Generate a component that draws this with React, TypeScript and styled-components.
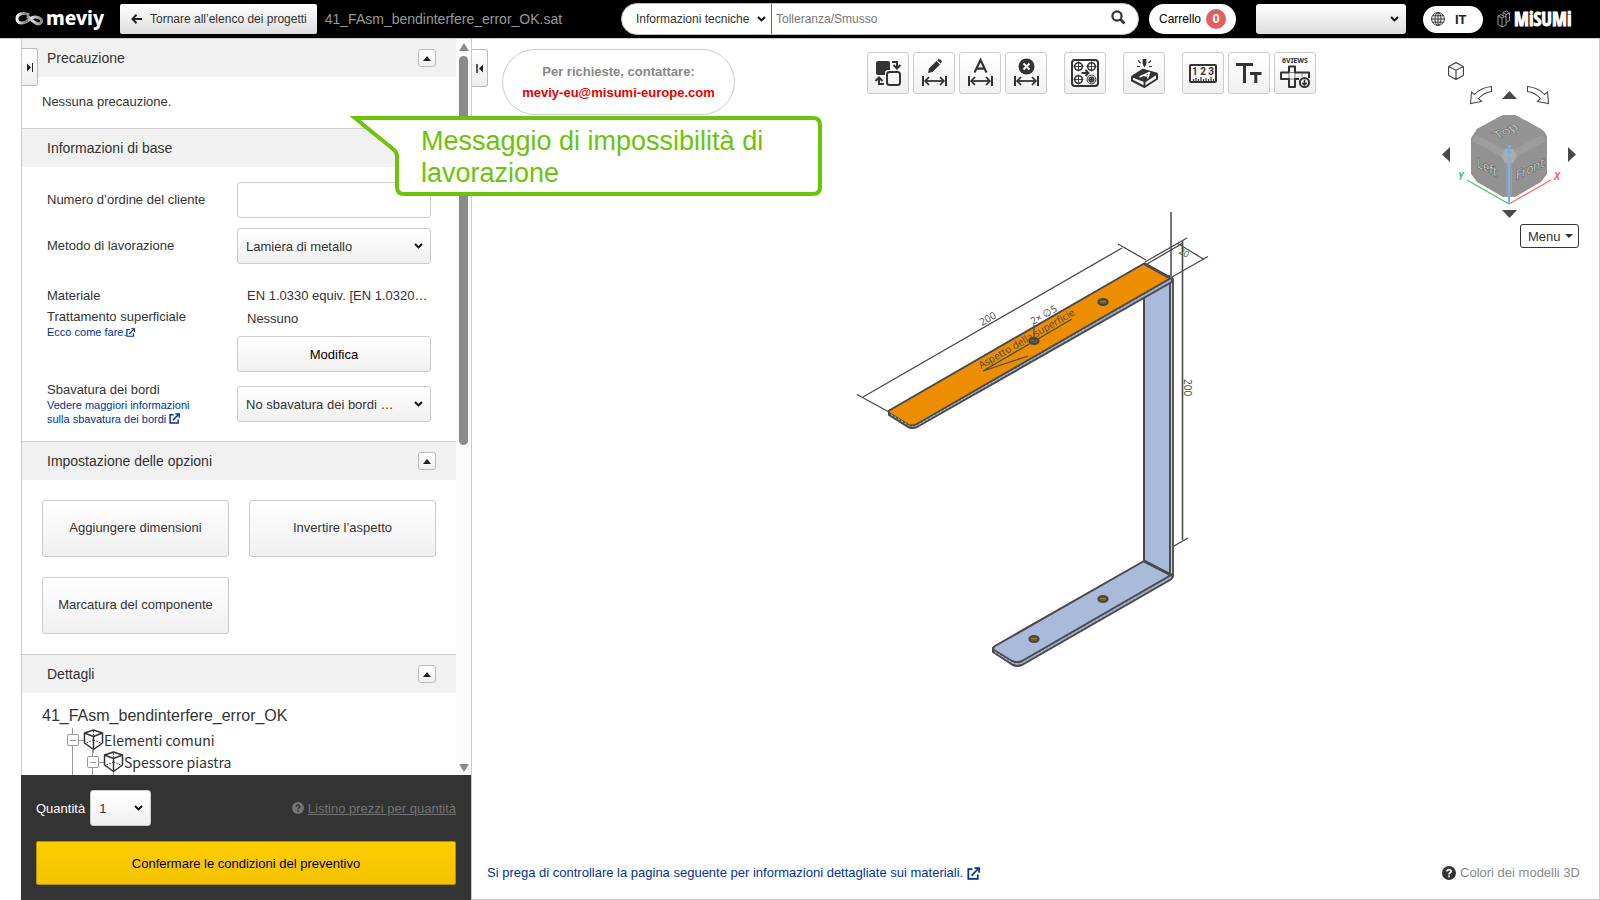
import React from "react";
import styled, { createGlobalStyle } from "styled-components";

const GlobalStyle = createGlobalStyle`
  * { box-sizing: border-box; }
  html, body { margin: 0; padding: 0; background: #fff; }
  body, button, input, select {
    font-family: "Liberation Sans", Arial, sans-serif;
    font-size: 13px;
    color: #333;
  }
  button { cursor: pointer; }
`;

const INK = "#333";
const LINE = "#4a4a4a";

/* ---------- page frame ---------- */

const Page = styled.div`
  position: relative;
  display: flex;
  flex-direction: column;
  height: 100vh;
  min-height: 600px;
  overflow: hidden;
`;

const Body = styled.div`
  display: flex;
  flex: 1;
  min-height: 0;
  padding-left: 21px;
`;

/* ---------- header ---------- */

const Header = styled.header`
  display: flex;
  align-items: center;
  height: 39px;
  flex: none;
  padding-right: 27px;
  background: #000;
  border-bottom: 1px solid #ccc;
`;

const HeaderLeft = styled.div`
  display: flex;
  align-items: center;
  flex: 1;
  min-width: 0;
  padding-left: 15px;
`;

const MeviyLogo = styled.svg`
  width: 92px;
  height: 34px;
  flex: none;
`;

const BackButton = styled.button`
  display: flex;
  align-items: center;
  gap: 8px;
  height: 30px;
  margin-left: 13px;
  padding: 0 10px 0 11px;
  border: 0;
  border-radius: 2px;
  background: linear-gradient(#fff, #ddd);
  font-size: 12px;
  white-space: nowrap;
`;

const FileName = styled.span`
  margin-left: 8px;
  color: #999;
  font-size: 14px;
  white-space: nowrap;
`;

const Search = styled.form`
  display: flex;
  align-items: center;
  width: 518px;
  height: 32px;
  border: 1px solid #bbb;
  border-radius: 16px;
  background: #fff;
  overflow: hidden;
`;

const SearchSelectBox = styled.div`
  position: relative;
  width: 150px;
  height: 30px;
  border-right: 1px solid #666;
`;

const SearchInput = styled.input`
  flex: 1;
  min-width: 0;
  height: 30px;
  padding: 0 4px;
  border: 0;
  outline: 0;
  background: transparent;
  font-size: 12px;
  &::placeholder { color: #777; opacity: 1; }
`;

const SearchButton = styled.button`
  width: 40px;
  height: 30px;
  padding: 0;
  border: 0;
  background: none;
`;

const CartButton = styled.button`
  display: flex;
  align-items: center;
  gap: 5px;
  height: 30px;
  width: 87px;
  margin-left: 10px;
  padding: 0 10px;
  border: 0;
  border-radius: 15px;
  background: #fff;
  color: #000;
  font-size: 12px;
`;

const CartCount = styled.span`
  flex: none;
  width: 20px;
  height: 20px;
  border-radius: 10px;
  background: #e06060;
  color: #fff;
  font-size: 13px;
  line-height: 20px;
  font-weight: bold;
  text-align: center;
`;

const UserSelectBox = styled.div`
  position: relative;
  width: 150px;
  height: 30px;
  margin-left: 20px;
`;

const LanguageButton = styled.button`
  display: flex;
  align-items: center;
  gap: 10px;
  width: 60px;
  height: 27px;
  margin-left: 17px;
  padding: 0 8px;
  border: 0;
  border-radius: 14px;
  background: #fff;
  color: #222;
  font-size: 13px;
  font-weight: bold;
`;

const MisumiLogo = styled.svg`
  width: 76px;
  height: 30px;
  margin-left: 14px;
  flex: none;
`;

/* ---------- shared controls ---------- */

type SelectLook = "plain" | "grey" | "dim";
const looks: Record<SelectLook, string> = {
  plain: "border: 0; padding: 0 16px 0 14px; background: transparent; font-size: 12px;",
  grey: "border: 1px solid #ccc; padding: 0 24px 0 8px; background: linear-gradient(#fff, #f0f0f0);",
  dim: "border: 0; padding: 0 24px 0 8px; background: linear-gradient(#fff, #ddd);",
};

const NativeSelect = styled.select<{ $look: SelectLook }>`
  appearance: none;
  display: block;
  width: 100%;
  height: 100%;
  border-radius: 3px;
  outline: 0;
  ${(p) => looks[p.$look]}
`;

const Chevron = styled.svg<{ $right: number }>`
  position: absolute;
  top: 50%;
  right: ${(p) => p.$right}px;
  width: 9px;
  height: 6px;
  margin-top: -3px;
  pointer-events: none;
`;

const SelectBox = styled.div<{ $width?: number }>`
  position: relative;
  width: ${(p) => p.$width ?? 194}px;
  height: 36px;
`;

function Select(props: {
  id?: string;
  label?: string;
  look: SelectLook;
  options: string[];
  right?: number;
}) {
  return (
    <>
      <NativeSelect id={props.id} aria-label={props.label} $look={props.look}>
        {props.options.map((o) => (
          <option key={o}>{o}</option>
        ))}
      </NativeSelect>
      <Chevron $right={props.right ?? 8} viewBox="0 0 9 6" aria-hidden="true">
        <path d="M1 1 L4.5 4.4 L8 1" fill="none" stroke="#111" strokeWidth="2" />
      </Chevron>
    </>
  );
}

/* ---------- side panel ---------- */

const Panel = styled.aside`
  position: relative;
  display: flex;
  flex-direction: column;
  width: 450px;
  flex: none;
  border-left: 1px solid #ccc;
`;

const PanelScroll = styled.div`
  display: flex;
  flex: 1;
  min-height: 0;
`;

const PanelContent = styled.div`
  flex: 1;
  min-width: 0;
  overflow: hidden;
`;

const ScrollTrack = styled.div`
  display: flex;
  flex-direction: column;
  align-items: center;
  width: 15px;
  padding: 4px 0 3px;
  background: #fcfcfc;
`;

const ScrollThumb = styled.div`
  width: 9px;
  height: 389px;
  margin: 5px 0 auto;
  border-radius: 5px;
  background: #8b8b8b;
`;

const PanelTab = styled.button`
  display: flex;
  align-items: center;
  justify-content: center;
  width: 16px;
  height: 38px;
  padding: 0;
  border: 1px solid #bbb;
  border-left: 0;
  border-radius: 0 3px 3px 0;
  background: linear-gradient(#fff, #eee);
`;

const LeftTabHolder = styled.div`
  position: absolute;
  left: 0;
  top: 9px;
`;

const Section = styled.section`
  & + & { border-top: 1px solid #ccc; }
`;

const SectionHeader = styled.div`
  display: flex;
  align-items: center;
  justify-content: space-between;
  height: 38px;
  padding: 0 20px 0 25px;
  background: #f1f1f1;
`;

const SectionTitle = styled.h2`
  margin: 0;
  font-size: 14px;
  font-weight: normal;
`;

const CollapseButton = styled.button`
  display: flex;
  align-items: center;
  justify-content: center;
  width: 18px;
  height: 18px;
  padding: 0;
  border: 1px solid #bbb;
  border-radius: 3px;
  background: linear-gradient(#fff, #f0f0f0);
`;

const Notice = styled.p`
  margin: 0;
  padding: 0 20px 2px;
  line-height: 49px;
`;

const FormBody = styled.div`
  display: flex;
  flex-direction: column;
  gap: 10px;
  padding: 15px 25px;
`;

const FormRow = styled.div`
  display: flex;
  align-items: center;
  justify-content: space-between;
`;

const MaterialRow = styled.div`
  display: flex;
  align-items: flex-start;
  justify-content: space-between;
  margin-top: 10px;
`;

const LabelStack = styled.div`
  display: flex;
  flex-direction: column;
  gap: 5px;
  padding-top: 4px;
`;

const Label = styled.label`
  display: block;
  line-height: 16px;
`;

const Term = styled.div`
  line-height: 16px;
`;

const HelpLink = styled.a`
  display: block;
  color: #003399;
  font-size: 11px;
  line-height: 14px;
  text-decoration: none;
  svg { vertical-align: -1px; }
`;

const TextInput = styled.input`
  width: 194px;
  height: 36px;
  padding: 0 8px;
  border: 1px solid #ccc;
  border-radius: 3px;
`;

const ValueStack = styled.div`
  width: 194px;
`;

const Value = styled.div`
  padding: 0 10px;
  line-height: 23px;
  white-space: nowrap;
`;

const PlainButton = styled.button<{ $top?: number; $ink?: string }>`
  width: 100%;
  height: 36px;
  margin-top: ${(p) => p.$top ?? 0}px;
  padding: 0 4px;
  border: 1px solid #ccc;
  border-radius: 3px;
  background: linear-gradient(#fff, #f0f0f0);
  color: ${(p) => p.$ink ?? INK};
`;

const OptionButton = styled(PlainButton)`
  height: 57px;
  padding-bottom: 2px;
`;

const OptionGrid = styled.div`
  display: grid;
  grid-template-columns: 1fr 1fr;
  gap: 20px;
  padding: 20px;
`;

const ModelName = styled.div`
  padding: 12px 20px 2px;
  font-size: 16px;
  line-height: 22px;
`;

const Tree = styled.ul`
  margin: 0;
  padding: 0;
  list-style: none;
`;

const TreeItem = styled.li<{ $level: number }>`
  display: flex;
  align-items: center;
  height: 22px;
  padding-left: ${(p) => 45 + p.$level * 20}px;
  font-family: "Noto Sans CJK JP", "Noto Sans", sans-serif;
  font-size: 14px;
  line-height: 22px;
`;

const TreeGlyph = styled.svg`
  width: 37px;
  height: 22px;
  flex: none;
  overflow: visible;
`;

const OrderBar = styled.div`
  flex: none;
  margin-left: -1px;
  padding: 15px;
  background: #333;
`;

const QuantityRow = styled.div`
  display: flex;
  align-items: center;
  gap: 5px;
  margin-bottom: 15px;
`;

const QuantityLabel = styled.label`
  color: #fff;
`;

const PriceListLink = styled.a`
  display: flex;
  align-items: center;
  gap: 4px;
  margin-left: auto;
  color: #747474;
  text-decoration: none;
  span { text-decoration: underline; }
`;

const ConfirmButton = styled.button`
  width: 420px;
  height: 44px;
  border: 1px solid #b89300;
  border-radius: 2px;
  background: linear-gradient(#ffce00, #f2c200);
  color: #000;
`;

/* ---------- viewer ---------- */

const Viewer = styled.main`
  position: relative;
  display: flex;
  flex-direction: column;
  justify-content: space-between;
  flex: 1;
  min-width: 0;
  border: 1px solid #ccc;
  border-top: 0;
`;

const ModelCanvas = styled.svg`
  position: absolute;
  inset: 0;
  width: 100%;
  height: 100%;
`;

const ViewerTop = styled.div`
  position: relative;
  display: flex;
  align-items: flex-start;
  padding: 10px 20px 0 0;
`;

const Contact = styled.div`
  width: 233px;
  height: 66px;
  margin-left: 14px;
  padding-top: 11px;
  border: 1px solid #ccc;
  border-radius: 33px;
  background: #fff;
  color: #888;
  font-weight: bold;
  line-height: 21px;
  text-align: center;
  a { display: block; color: #e60000; text-decoration: none; }
`;

const Toolbar = styled.div`
  display: flex;
  gap: 17px;
  margin: 3px 0 0 auto;
`;

const ToolGroup = styled.div`
  display: flex;
  gap: 4px;
`;

const ToolButton = styled.button`
  width: 42px;
  height: 42px;
  padding: 0;
  border: 1px solid #ccc;
  border-radius: 3px;
  background: linear-gradient(#fff, #f0f0f0);
  svg { display: block; width: 40px; height: 40px; }
`;

const Navigator = styled.div`
  display: flex;
  flex-direction: column;
  width: 140px;
  margin: 13px 0 0 123px;
`;

const IconButton = styled.button`
  display: block;
  padding: 0;
  border: 0;
  background: none;
  svg { display: block; overflow: visible; }
`;

const NavHome = styled.div`
  padding-left: 9px;
`;

const NavTurn = styled.div`
  display: flex;
  justify-content: center;
  align-items: center;
  gap: 10px;
  margin: 6px 0 3px;
`;

const NavCube = styled.div`
  display: flex;
  justify-content: space-between;
  align-items: center;
  padding: 0 3px;
`;

const CubeDrawing = styled.svg`
  width: 118px;
  height: 95px;
  overflow: visible;
`;

const NavDown = styled.div`
  display: flex;
  justify-content: center;
  margin: 8px 0 6px;
`;

const MenuButton = styled.button`
  display: flex;
  align-items: center;
  justify-content: space-between;
  align-self: flex-end;
  width: 59px;
  height: 24px;
  padding: 0 5px 0 7px;
  border: 1px solid #333;
  border-radius: 3px;
  background: #fff;
`;

const ViewerBottom = styled.div`
  position: relative;
  display: flex;
  justify-content: space-between;
  padding: 0 19px 17px 15px;
  line-height: 18px;
`;

const FooterLink = styled.a<{ $color: string }>`
  display: flex;
  align-items: center;
  gap: 4px;
  color: ${(p) => p.$color};
  text-decoration: none;
`;

/* ---------- callout ---------- */

const Callout = styled.div`
  position: absolute;
  left: 350px;
  top: 116px;
  width: 472px;
  height: 80px;
`;

const CalloutShape = styled.svg`
  position: absolute;
  inset: 0;
  width: 472px;
  height: 80px;
`;

const CalloutText = styled.p`
  position: relative;
  margin: 0;
  padding: 9px 20px 0 71px;
  color: #6cc40a;
  font-size: 27px;
  line-height: 32px;
`;

/* ---------- small glyphs ---------- */

const Triangle = ({ dir, w, h, fill = LINE }: { dir: "up" | "down" | "left" | "right"; w: number; h: number; fill?: string }) => {
  const pts = {
    up: `0,${h} ${w},${h} ${w / 2},0`,
    down: `0,0 ${w},0 ${w / 2},${h}`,
    left: `${w},0 ${w},${h} 0,${h / 2}`,
    right: `0,0 0,${h} ${w},${h / 2}`,
  }[dir];
  return (
    <svg width={w} height={h} viewBox={`0 0 ${w} ${h}`} aria-hidden="true">
      <polygon points={pts} fill={fill} />
    </svg>
  );
};

const External = ({ size, color = "#003399" }: { size: number; color?: string }) => (
  <svg width={size} height={size} viewBox="0 0 12 12" fill="none" stroke={color} strokeWidth="1.6" aria-hidden="true">
    <path d="M5 2H1.2V11H10V7" />
    <path d="M4.2 8 L10.4 1.6" />
    <path d="M7 1H11.2V5.2" />
  </svg>
);

const Question = ({ size, fill, mark }: { size: number; fill: string; mark: string }) => (
  <svg width={size} height={size} viewBox="0 0 14 14" aria-hidden="true">
    <circle cx="7" cy="7" r="7" fill={fill} />
    <path d="M5 5.5 C5 2.9 9.2 3 9.1 5.4 C9 6.9 7.1 6.7 7.1 8.4" fill="none" stroke={mark} strokeWidth="1.7" />
    <rect x="6.2" y="9.5" width="1.8" height="1.8" fill={mark} />
  </svg>
);

const DimArrow = () => (
  <g fill="none" stroke={INK} strokeWidth="2">
    <path d="M9 23V33M32 23V33" />
    <path d="M11 28H30" strokeWidth="1.8" />
    <path d="M15 24L11.2 28L15 32M26 24L29.8 28L26 32" strokeWidth="1.8" />
  </g>
);

const SwapIcon = () => (
  <svg viewBox="0 0 40 40" fill="none" stroke={INK} strokeWidth="2">
    <path d="M10 8H20Q22 8 22 10V17H20Q17 17 17 20V22H10Q8 22 8 20V10Q8 8 10 8Z" fill={INK} stroke="none" />
    <rect x="19" y="19" width="13" height="13" rx="2.5" />
    <path d="M24 9H29V14M25.5 12L29 15.5L32.5 12" />
    <path d="M16 31H11V25M7.5 28L11 24.5L14.5 28" />
  </svg>
);

const PencilIcon = () => (
  <svg viewBox="0 0 40 40">
    <path d="M14 20L15 15.5L22.5 8L26 11.5L18.5 19Z" fill={INK} />
    <path d="M23.3 7.2L24.3 6.3Q25.2 5.6 26.2 6.4L27.4 7.6Q28.3 8.6 27.5 9.6L26.7 10.6Z" fill={INK} />
    <DimArrow />
  </svg>
);

const LetterDimIcon = () => (
  <svg viewBox="0 0 40 40">
    <path d="M14.5 19.5L20.5 7L26.5 19.5M16.8 15.6H24.2" fill="none" stroke={INK} strokeWidth="2.2" />
    <DimArrow />
  </svg>
);

const DeleteDimIcon = () => (
  <svg viewBox="0 0 40 40">
    <circle cx="20.5" cy="13.5" r="8" fill={INK} />
    <path d="M17.5 10.5L23.5 16.5M23.5 10.5L17.5 16.5" stroke="#fff" strokeWidth="2" />
    <DimArrow />
  </svg>
);

const HolesIcon = () => (
  <svg viewBox="0 0 40 40" fill="none" stroke={INK} strokeWidth="1.6">
    <rect x="7" y="7" width="26" height="26" rx="3" strokeWidth="2" />
    {[[13.5, 13.5], [26.5, 13.5], [13.5, 26.5]].map(([x, y]) => (
      <g key={`${x}-${y}`}>
        <circle cx={x} cy={y} r="3.8" />
        <path d={`M${x - 5} ${y}H${x + 5}M${x} ${y - 5}V${y + 5}`} strokeWidth="0.9" />
      </g>
    ))}
    <circle cx="26.5" cy="26.5" r="4.4" strokeWidth="1" />
    <circle cx="26.5" cy="26.5" r="2.4" strokeWidth="1.4" />
    <circle cx="26.5" cy="26.5" r="0.8" fill={INK} />
    <path d="M16.5 20H23M20.5 17L23.4 20L20.5 23" strokeWidth="2" />
  </svg>
);

const EngraveIcon = () => (
  <svg viewBox="0 0 40 40" fill="none" stroke={INK} strokeWidth="2" strokeLinejoin="round">
    <path d="M8 23.5L19 16.5L33 20.5L21 28.5Z" fill={INK} strokeWidth="1.6" />
    <path d="M8 24V27.5L20.5 34L33 26V21" />
    <path d="M20.5 29V34" />
    <path d="M15.5 24L25.5 19.5L23.5 25.5M19.5 22.3L24.5 23.3" stroke="#fff" strokeWidth="1.5" />
    <path d="M18.6 6H22.4V11L20.5 14.5L18.6 11Z" fill={INK} stroke="none" />
    <path d="M14 7.5L16.5 10M13 13.5H16M27 7.5L24.5 10M28 13.5H25" strokeWidth="1.2" />
  </svg>
);

const RulerIcon = () => (
  <svg viewBox="0 0 40 40">
    <rect x="7" y="12" width="26" height="17" rx="1" fill="none" stroke={INK} strokeWidth="2" />
    <text x="20" y="22" textAnchor="middle" fontFamily="Roboto, sans-serif" fontWeight="bold" fontSize="10" fill={INK}>1 2 3</text>
    <path d="M10.5 26V29M13 25V29M15.5 26V29M18 24V29M20.5 26V29M23 25V29M25.5 26V29M28 24V29M30.5 26V29" stroke={INK} strokeWidth="1.2" />
  </svg>
);

const TextIcon = () => (
  <svg viewBox="0 0 40 40" fill="none" stroke={INK} strokeWidth="3">
    <path d="M7 11.5H24M15.5 11.5V30" />
    <path d="M21 20.5H32.5M26.8 20.5V30" />
  </svg>
);

const ViewsIcon = () => (
  <svg viewBox="0 0 40 40" fill="none" stroke={INK} strokeWidth="2" strokeLinejoin="round">
    <text x="20" y="10" textAnchor="middle" fontFamily="Noto Sans, sans-serif" fontWeight="bold" fontSize="7" fill={INK} stroke="none">6VIEWS</text>
    <path d="M14 19.5V13.5H20V19.5H34V25M24 26H20V34H14V26H6V19.5H14" />
    <path d="M14 19.5H20V26H14ZM27 19.5V24" strokeWidth="0.6" />
    <circle cx="29.5" cy="29.5" r="4.6" />
    <path d="M29.5 26.5V31.5M27.2 29.7L29.5 32L31.8 29.7" strokeWidth="1.6" />
  </svg>
);

const toolGroups: { label: string; icon: React.ReactNode }[][] = [
  [
    { label: "Inverti", icon: <SwapIcon /> },
    { label: "Modifica quota", icon: <PencilIcon /> },
    { label: "Testo quota", icon: <LetterDimIcon /> },
    { label: "Elimina quota", icon: <DeleteDimIcon /> },
  ],
  [{ label: "Fori", icon: <HolesIcon /> }],
  [{ label: "Marcatura", icon: <EngraveIcon /> }],
  [
    { label: "Misura", icon: <RulerIcon /> },
    { label: "Dimensione testo", icon: <TextIcon /> },
    { label: "6 viste", icon: <ViewsIcon /> },
  ],
];

/* ---------- 3D part ---------- */

const Hole = ({ x, y }: { x: number; y: number }) => (
  <g>
    <ellipse cx={x} cy={y} rx="4.6" ry="3" fill="#6b6030" stroke="#444" strokeWidth="2" />
    <path d={`M${x - 3} ${y - 0.5}H${x + 3}`} stroke="#9a7d1c" strokeWidth="1" />
  </g>
);

const Part = () => (
  <ModelCanvas viewBox="472 39 1127 860" preserveAspectRatio="xMidYMid meet" role="img" aria-label="Modello 3D">
    <g stroke={LINE} strokeWidth="2" strokeLinejoin="round">
      <path d="M1144 290L1170 276V575L1144 561Z" fill="#a9badb" />
      <path d="M1170 278L1173 279V576L1170 578Z" fill="#c3cfe6" strokeWidth="1.8" />
      <path d="M993 648V652L1012 664.5Q1017 667 1022 665L1170 580Q1173 578 1173 575L1160 572Z" fill="#8fa0c4" />
      <path d="M1144 561L1171 575L1022 661Q1017 663.5 1012 661L994 650Q992 648 995 646Z" fill="#a9badb" />
      <path d="M1144 561L1171 575" strokeWidth="3" />
      <path d="M889 411V415L908 427Q912 429 917 427L1172 282V278L1160 276Z" fill="#8fa0c4" />
      <path d="M1144 263.5L1171 278L917 424Q912 427 908 424.5L890 413.5Q887.5 411.5 890 410Z" fill="#ec8e00" />
      <path d="M1144 263.5L1170 278" strokeWidth="3" />
    </g>
    <g stroke="#b9c4dc" strokeWidth="1" strokeDasharray="2 2" fill="none">
      <path d="M891 414.5L909 425.5Q912 427.5 917 425.5L1171 280" />
      <path d="M995 652L1012 662.5Q1017 665 1022 663L1171 577.5" />
    </g>
    <Hole x={1103} y={302} />
    <Hole x={1034} y={341} />
    <Hole x={1103} y={599} />
    <Hole x={1034} y={639} />
    <path d="M1171 212V278" stroke="#777" strokeWidth="2" />
    <g stroke={LINE} strokeWidth="1.3" fill="none">
      <path d="M863 397L1122 248M857 394.5L889 412M1118 244L1146 260" />
      <path d="M1145 262L1187 238M1147 264L1183 243M1172 277L1208 256.5M1177 243L1204 259.5" />
      <path d="M1174 546L1188 538M1034 325V340" />
      <path d="M983 371L1072 319M983 371L1028 356" />
      <path d="M1182.5 241V540" strokeWidth="1.6" />
    </g>
    <g fill={LINE} fontFamily="Open Sans, sans-serif" fontSize="10">
      <text transform="translate(982 326) rotate(-30)">200</text>
      <text transform="translate(1033 325) rotate(-30)">2× ∅5</text>
      <text transform="translate(981 369) rotate(-30)">Aspetto della superficie</text>
      <text transform="translate(1178 253) rotate(28)" fontSize="9">20</text>
      <text transform="translate(1184 379) rotate(90)">200</text>
    </g>
  </ModelCanvas>
);

const ViewCube = () => (
  <CubeDrawing viewBox="0 0 118 95" role="img" aria-label="Orientamento">
    <path d="M53 8H65L91 22Q97 26 97 31V67L91 75L65 90H53L27 75L21 67V31L27 22Z" fill="#929292" />
    <path d="M53 8H65L91 22L92 28L63 43H55L26 28L27 22Z" fill="#949494" />
    <path d="M26 28L55 43L52 50L22 34Z" fill="#9d9d9d" />
    <path d="M92 28L63 43L66 50L96 34Z" fill="#9d9d9d" />
    <path d="M56 56H62V88L65 90H53L56 88Z" fill="#9b9b9b" />
    <path d="M55 42H63L67 49L63 56H55L51 49Z" fill="#ababab" />
    <g fill="#c6c6c6" stroke="#6c6c6c" strokeWidth="1.5" paintOrder="stroke" fontFamily="Open Sans, sans-serif" fontSize="13">
      <text transform="matrix(0.87 -0.42 0.6 0.6 48 32)" fontSize="14">Top</text>
      <text transform="matrix(0.87 0.42 0 1 27 60)">Left</text>
      <text transform="matrix(0.87 -0.42 0 1 66 73)">Front</text>
    </g>
    <path d="M17 73L59 97" stroke="#3ccb58" strokeWidth="1.3" />
    <path d="M59 97L101 73" stroke="#f66" strokeWidth="1.3" />
    <path d="M59 49V97" stroke="#74b3f2" strokeWidth="2" />
    <g fontFamily="Open Sans, sans-serif" fontSize="10" fontWeight="bold" fontStyle="italic">
      <text x="56" y="46" fill="#6fb0f3">Z</text>
      <text x="8" y="73" fill="#3ccb58">Y</text>
      <text x="104" y="73" fill="#f66">X</text>
    </g>
  </CubeDrawing>
);

const TurnArrow = ({ flip }: { flip?: boolean }) => (
  <svg width="22" height="18" viewBox="0 0 22 18" fill="none" stroke={LINE} strokeWidth="1.1" aria-hidden="true">
    <path
      transform={flip ? "translate(22 0) scale(-1 1)" : undefined}
      d="M21.5 0.5V5.5Q14 6.5 8.5 12.5L11.5 15.5L0.5 17.5L1.5 6L4.5 8.5Q11 1.5 21.5 0.5Z"
    />
  </svg>
);

const TreeMarks = ({ level }: { level: number }) => (
  <TreeGlyph viewBox="0 0 37 22" aria-hidden="true" fill="none" stroke="#999" strokeWidth="1">
    {level > 0 && <path d="M-14.5 -1V24" />}
    <path d="M5.5 -1V5M5.5 17V24M12 11.5H17M26.5 20V24" />
    <rect x="0.5" y="5.5" width="11" height="11" rx="1.5" fill="#fff" />
    <path d="M3 11.5H9" />
    <g stroke={INK} strokeWidth="1.5" strokeLinejoin="round">
      <path d="M26.5 1L35.5 4V14L26.5 20.5L17.5 14V4Z" fill="#fff" />
      <path d="M17.5 4L26.5 7.5L35.5 4M26.5 7.5V20" />
      <path d="M26.5 2V11L19 14M26.5 11L34 14" strokeWidth="1" strokeDasharray="1.5 1.5" />
    </g>
  </TreeGlyph>
);

function PanelSection({ title, children }: { title: string; children: React.ReactNode }) {
  return (
    <Section>
      <SectionHeader>
        <SectionTitle>{title}</SectionTitle>
        <CollapseButton aria-label={`Comprimi ${title}`}>
          <Triangle dir="up" w={8} h={5} fill="#222" />
        </CollapseButton>
      </SectionHeader>
      {children}
    </Section>
  );
}

export default function App() {
  return (
    <>
      <GlobalStyle />
      <Page>
        <Header>
          <HeaderLeft>
            <MeviyLogo viewBox="0 0 92 34" role="img" aria-label="meviy">
              <defs>
                <linearGradient id="loop" x1="0" x2="1">
                  <stop offset="0" stopColor="#fff" />
                  <stop offset="0.35" stopColor="#777" />
                  <stop offset="0.6" stopColor="#ddd" />
                  <stop offset="1" stopColor="#888" />
                </linearGradient>
              </defs>
              <path
                d="M14 13C10 10.5 2 11 2 16.5C2 22.5 9 22 13 18.5C16.5 15 20 14 24 15.8C29 18.5 26 23 21.5 21.5C18 20.3 16 16.5 12 14"
                fill="none"
                stroke="url(#loop)"
                strokeWidth="3"
              />
              <text x="31" y="23" fontFamily="Noto Sans, sans-serif" fontWeight="800" fontSize="19" fill="#fff">meviy</text>
            </MeviyLogo>
            <BackButton>
              <svg width="11" height="10" viewBox="0 0 11 10" fill="none" stroke="#222" strokeWidth="2" aria-hidden="true">
                <path d="M11 5H1.5M5.5 0.8L1.5 5L5.5 9.2" />
              </svg>
              Tornare all’elenco dei progetti
            </BackButton>
            <FileName>41_FAsm_bendinterfere_error_OK.sat</FileName>
          </HeaderLeft>
          <Search onSubmit={(e) => e.preventDefault()}>
            <SearchSelectBox>
              <Select label="Categoria di ricerca" look="plain" options={["Informazioni tecniche"]} right={5} />
            </SearchSelectBox>
            <SearchInput aria-label="Cerca" placeholder="Tolleranza/Smusso" />
            <SearchButton aria-label="Avvia ricerca">
              <svg width="15" height="15" viewBox="0 0 15 15" fill="none" stroke={INK} aria-hidden="true">
                <circle cx="6" cy="6" r="4.6" strokeWidth="2.2" />
                <path d="M9.5 9.5L13.5 13.5" strokeWidth="2.6" />
              </svg>
            </SearchButton>
          </Search>
          <CartButton>
            Carrello <CartCount>0</CartCount>
          </CartButton>
          <UserSelectBox>
            <Select label="Utente" look="dim" options={[""]} right={7} />
          </UserSelectBox>
          <LanguageButton>
            <svg width="14" height="14" viewBox="0 0 14 14" fill="none" stroke={INK} aria-hidden="true">
              <circle cx="7" cy="7" r="6.4" />
              <ellipse cx="7" cy="7" rx="3" ry="6.4" />
              <path d="M7 0.5V13.5M0.5 7H13.5M1.5 3.8H12.5M1.5 10.2H12.5" />
            </svg>
            IT
          </LanguageButton>
          <MisumiLogo viewBox="0 0 76 30" role="img" aria-label="MiSUMi">
            <g fill="none" stroke="#aaa" strokeWidth="0.9">
              <path d="M1 12L5 14V23L1 20.5ZM1 12L4 10.5L7 12.5M5 14L9 12V21L5 23M6 12V8.5L9.5 7L12.5 9V16.5L9 18.5M6 8.5L9 10.5L12.5 9M9 10.5V12" />
            </g>
            <text x="17" y="22" fontFamily="Liberation Sans Narrow, Open Sans Condensed, Liberation Sans, sans-serif" fontWeight="bold" fontSize="19" fill="#fff" stroke="#fff" strokeWidth="0.9">MiSUMi</text>
          </MisumiLogo>
        </Header>

        <Body>
          <Panel>
            <PanelScroll>
              <PanelContent>
                <PanelSection title="Precauzione">
                  <Notice>Nessuna precauzione.</Notice>
                </PanelSection>
                <PanelSection title="Informazioni di base">
                  <FormBody>
                    <FormRow>
                      <Label htmlFor="order">Numero d’ordine del cliente</Label>
                      <TextInput id="order" />
                    </FormRow>
                    <FormRow>
                      <Label htmlFor="method">Metodo di lavorazione</Label>
                      <SelectBox>
                        <Select id="method" look="grey" options={["Lamiera di metallo"]} />
                      </SelectBox>
                    </FormRow>
                    <MaterialRow>
                      <LabelStack>
                        <Term>Materiale</Term>
                        <div>
                          <Term>Trattamento superficiale</Term>
                          <HelpLink href="#come-fare">
                            Ecco come fare.<External size={9} />
                          </HelpLink>
                        </div>
                      </LabelStack>
                      <ValueStack>
                        <Value>EN 1.0330 equiv. [EN 1.0320…</Value>
                        <Value>Nessuno</Value>
                        <PlainButton $top={6} $ink="#000">Modifica</PlainButton>
                      </ValueStack>
                    </MaterialRow>
                    <FormRow>
                      <div>
                        <Label htmlFor="deburr">Sbavatura dei bordi</Label>
                        <HelpLink href="#sbavatura">
                          Vedere maggiori informazioni
                          <br />
                          sulla sbavatura dei bordi <External size={11} />
                        </HelpLink>
                      </div>
                      <SelectBox>
                        <Select id="deburr" look="grey" options={["No sbavatura dei bordi …"]} />
                      </SelectBox>
                    </FormRow>
                  </FormBody>
                </PanelSection>
                <PanelSection title="Impostazione delle opzioni">
                  <OptionGrid>
                    <OptionButton>Aggiungere dimensioni</OptionButton>
                    <OptionButton>Invertire l’aspetto</OptionButton>
                    <OptionButton>Marcatura del componente</OptionButton>
                  </OptionGrid>
                </PanelSection>
                <PanelSection title="Dettagli">
                  <ModelName>41_FAsm_bendinterfere_error_OK</ModelName>
                  <Tree>
                    <TreeItem $level={0}>
                      <TreeMarks level={0} />
                      Elementi comuni
                    </TreeItem>
                    <TreeItem $level={1}>
                      <TreeMarks level={1} />
                      Spessore piastra
                    </TreeItem>
                  </Tree>
                </PanelSection>
              </PanelContent>
              <ScrollTrack>
                <Triangle dir="up" w={10} h={8} fill="#8b8b8b" />
                <ScrollThumb />
                <Triangle dir="down" w={10} h={8} fill="#8b8b8b" />
              </ScrollTrack>
            </PanelScroll>
            <LeftTabHolder>
              <PanelTab aria-label="Apri pannello">
                <svg width="8" height="9" viewBox="0 0 8 9" aria-hidden="true">
                  <path d="M1 0.5L5 4.5L1 8.5Z" fill="#222" />
                  <path d="M6.5 0V9" stroke="#222" />
                </svg>
              </PanelTab>
            </LeftTabHolder>
            <OrderBar>
              <QuantityRow>
                <QuantityLabel htmlFor="qty">Quantità</QuantityLabel>
                <SelectBox $width={61}>
                  <Select id="qty" look="grey" options={["1"]} />
                </SelectBox>
                <PriceListLink href="#listino">
                  <Question size={12} fill="#747474" mark="#333" />
                  <span>Listino prezzi per quantità</span>
                </PriceListLink>
              </QuantityRow>
              <ConfirmButton>Confermare le condizioni del preventivo</ConfirmButton>
            </OrderBar>
          </Panel>

          <Viewer>
            <Part />
            <ViewerTop>
              <PanelTab aria-label="Chiudi pannello">
                <svg width="8" height="9" viewBox="0 0 8 9" aria-hidden="true">
                  <path d="M7 0.5L3 4.5L7 8.5Z" fill="#222" />
                  <path d="M1 0V9" stroke="#222" strokeWidth="1.5" />
                </svg>
              </PanelTab>
              <Contact>
                Per richieste, contattare:
                <a href="mailto:meviy-eu@misumi-europe.com">meviy-eu@misumi-europe.com</a>
              </Contact>
              <Toolbar>
                {toolGroups.map((group, i) => (
                  <ToolGroup key={i}>
                    {group.map((t) => (
                      <ToolButton key={t.label} aria-label={t.label}>
                        {t.icon}
                      </ToolButton>
                    ))}
                  </ToolGroup>
                ))}
              </Toolbar>
              <Navigator>
                <NavHome>
                  <IconButton aria-label="Vista iniziale">
                    <svg width="16" height="18" viewBox="0 0 16 18" fill="none" stroke={LINE} strokeWidth="1.2" strokeLinejoin="round">
                      <path d="M8 0.6L15.4 4.5V13.5L8 17.4L0.6 13.5V4.5ZM0.6 4.5L8 8.2L15.4 4.5M8 8.2V17.4" />
                    </svg>
                  </IconButton>
                </NavHome>
                <NavTurn>
                  <IconButton aria-label="Ruota a sinistra"><TurnArrow /></IconButton>
                  <IconButton aria-label="Su"><Triangle dir="up" w={15} h={8} /></IconButton>
                  <IconButton aria-label="Ruota a destra"><TurnArrow flip /></IconButton>
                </NavTurn>
                <NavCube>
                  <IconButton aria-label="Sinistra"><Triangle dir="left" w={8} h={15} /></IconButton>
                  <ViewCube />
                  <IconButton aria-label="Destra"><Triangle dir="right" w={8} h={15} /></IconButton>
                </NavCube>
                <NavDown>
                  <IconButton aria-label="Giù"><Triangle dir="down" w={15} h={8} /></IconButton>
                </NavDown>
                <MenuButton>
                  Menu <Triangle dir="down" w={8} h={4} fill={INK} />
                </MenuButton>
              </Navigator>
            </ViewerTop>
            <ViewerBottom>
              <FooterLink $color="#003399" href="#materiali">
                Si prega di controllare la pagina seguente per informazioni dettagliate sui materiali. <External size={13} />
              </FooterLink>
              <FooterLink $color="#888" href="#colori">
                <Question size={14} fill="#333" mark="#fff" />
                Colori dei modelli 3D
              </FooterLink>
            </ViewerBottom>
          </Viewer>
        </Body>

        <Callout role="note">
          <CalloutShape viewBox="0 0 472 80" aria-hidden="true">
            <path
              d="M5 2H463Q470 2 470 9V71Q470 78 463 78H54Q47 78 47 71V40Q47 36 43 33Z"
              fill="#fff"
              stroke="#6cc40a"
              strokeWidth="4"
              strokeMiterlimit="8"
            />
          </CalloutShape>
          <CalloutText>
            Messaggio di impossibilità di
            <br />
            lavorazione
          </CalloutText>
        </Callout>
      </Page>
    </>
  );
}
